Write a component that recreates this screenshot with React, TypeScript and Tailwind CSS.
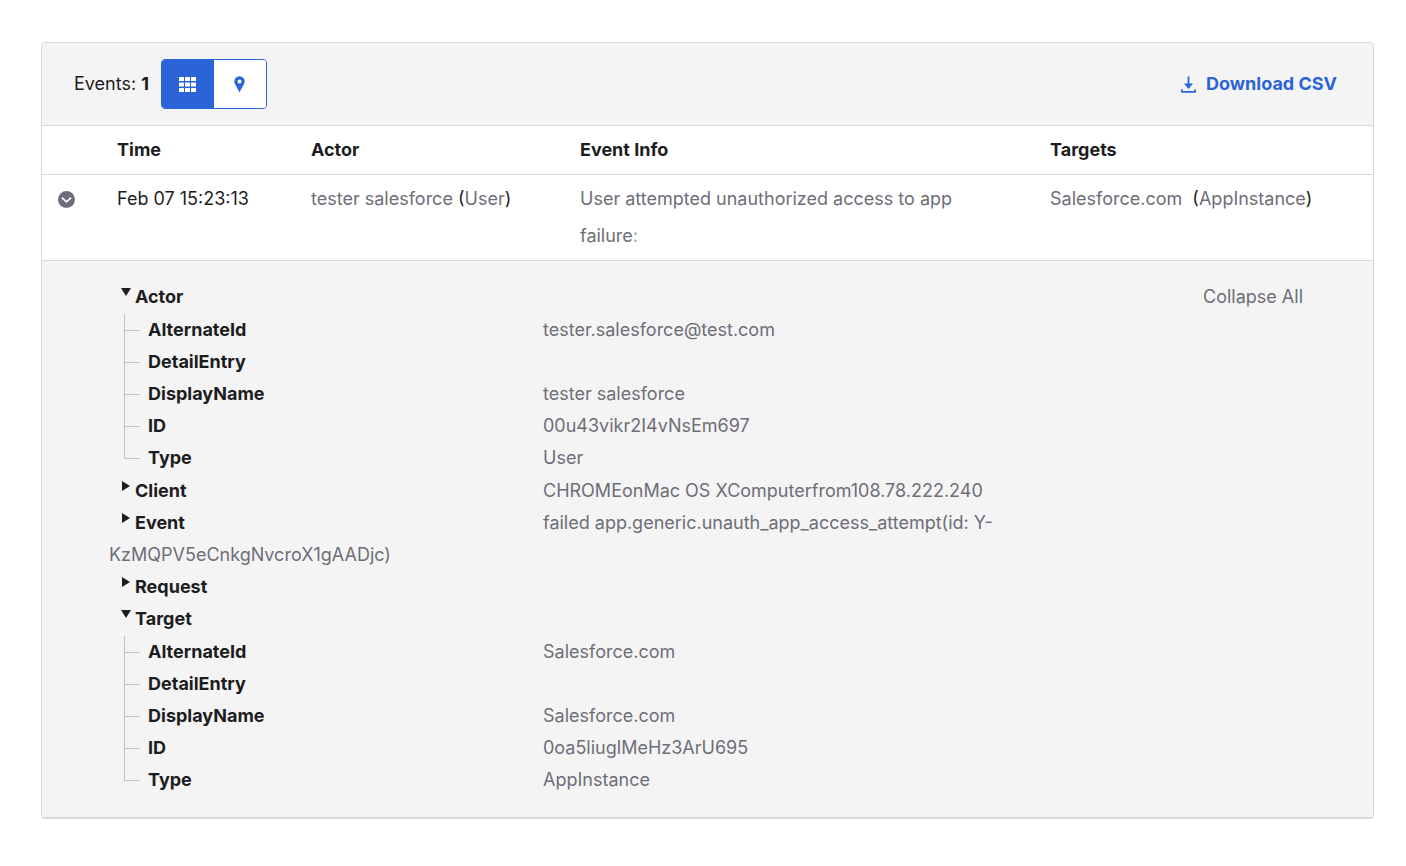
import { useState } from 'react'
import clsx from 'clsx'

type Field = { label: string; value?: string }
type Section = { label: string; value?: string; fields?: Field[] }

const SECTIONS: Section[] = [
  {
    label: 'Actor',
    fields: [
      { label: 'AlternateId', value: 'tester.salesforce@test.com' },
      { label: 'DetailEntry' },
      { label: 'DisplayName', value: 'tester salesforce' },
      { label: 'ID', value: '00u43vikr2I4vNsEm697' },
      { label: 'Type', value: 'User' },
    ],
  },
  { label: 'Client', value: 'CHROMEonMac OS XComputerfrom108.78.222.240' },
  { label: 'Event', value: 'failed app.generic.unauth_app_access_attempt(id: Y-KzMQPV5eCnkgNvcroX1gAADjc)' },
  { label: 'Request' },
  {
    label: 'Target',
    fields: [
      { label: 'AlternateId', value: 'Salesforce.com' },
      { label: 'DetailEntry' },
      { label: 'DisplayName', value: 'Salesforce.com' },
      { label: 'ID', value: '0oa5liuglMeHz3ArU695' },
      { label: 'Type', value: 'AppInstance' },
    ],
  },
]

function GridIcon() {
  return (
    <svg width="17" height="15" viewBox="0 0 17 15" fill="currentColor" aria-hidden="true">
      {[0, 6, 12].map((x) =>
        [0, 5.5, 11].map((y) => <rect key={`${x}-${y}`} x={x} y={y} width="5" height="4" rx="0.5" />),
      )}
    </svg>
  )
}

function PinIcon() {
  return (
    <svg width="11" height="17" viewBox="0 0 11 17" fill="currentColor" aria-hidden="true">
      <path
        fillRule="evenodd"
        d="M5.5 0.3A5.2 5.2 0 0 0 0.3 5.5C0.3 8.2 3.2 11.2 5.5 16.6C7.8 11.2 10.7 8.2 10.7 5.5A5.2 5.2 0 0 0 5.5 0.3ZM5.5 3.5A2 2 0 1 1 5.5 7.5A2 2 0 0 1 5.5 3.5Z"
      />
    </svg>
  )
}

function DownloadIcon() {
  return (
    <svg width="15" height="17" viewBox="0 0 15 17" aria-hidden="true">
      <path d="M6.6 0.5H8.4V7.5H12L7.5 13L3 7.5H6.6Z" fill="currentColor" />
      <path d="M0.9 13.2V15.9H14.1V13.2" fill="none" stroke="currentColor" strokeWidth="1.6" />
    </svg>
  )
}

function ExpandIcon({ open }: { open: boolean }) {
  return (
    <svg width="17" height="17" viewBox="0 0 16 16" aria-hidden="true" className={clsx(!open && '-rotate-90')}>
      <circle cx="8" cy="8" r="8" fill="#6e6e78" />
      <path d="M3.6 6.2L8 10.2L12.4 6.2" fill="none" stroke="#fff" strokeWidth="1.5" />
    </svg>
  )
}

function Caret({ open }: { open: boolean }) {
  return (
    <svg width="10" height="10" viewBox="0 0 10 10" fill="currentColor" aria-hidden="true">
      {open ? <path d="M0 1H10L5 9Z" /> : <path d="M1 0L9 5L1 10Z" />}
    </svg>
  )
}

function FieldRow({ field, last }: { field: Field; last: boolean }) {
  return (
    <li className="flex">
      <span className="w-4 shrink-0">
        <span className="block h-[17px] border-b border-l border-[#c1c1c8]" />
        {!last && <span className="block h-[15px] border-l border-[#c1c1c8]" />}
      </span>
      <span className="w-[403px] shrink-0 pl-2 font-bold text-[#1d1d21]">{field.label}</span>
      <span>{field.value}</span>
    </li>
  )
}

export default function App() {
  const [view, setView] = useState<'table' | 'map'>('table')
  const [rowOpen, setRowOpen] = useState(true)
  const [open, setOpen] = useState<string[]>(['Actor', 'Target'])

  const toggle = (label: string) =>
    setOpen((cur) => (cur.includes(label) ? cur.filter((l) => l !== label) : [...cur, label]))

  const viewCls = (active: boolean) =>
    clsx('flex w-[52px] items-center justify-center', active ? 'bg-[#2a64d6] text-white' : 'bg-white text-[#2a64d6]')

  return (
    <main className="min-h-screen bg-white pt-[42px] pr-8 pb-12 pl-[41px] font-['Inter','Liberation_Sans',sans-serif] text-lg text-[#1d1d21]">
      <section className="overflow-hidden rounded border border-b-2 border-[#d7d7dc] bg-white">
        {/* Toolbar */}
        <header className="flex items-center justify-between border-b border-[#d7d7dc] bg-[#f4f4f4] py-4 pr-9 pl-8">
          <div className="flex items-center gap-3">
            <p>
              Events: <span className="font-bold">1</span>
            </p>
            <div className="flex h-[50px] overflow-hidden rounded border border-[#2a64d6]">
              <button type="button" aria-label="Table view" onClick={() => setView('table')} className={viewCls(view === 'table')}>
                <GridIcon />
              </button>
              <button type="button" aria-label="Map view" onClick={() => setView('map')} className={viewCls(view === 'map')}>
                <PinIcon />
              </button>
            </div>
          </div>
          <a href="#download" className="flex items-center gap-2.5 font-bold text-[#2a64d6]">
            <DownloadIcon />
            Download CSV
          </a>
        </header>

        {/* Events */}
        <table className="w-full table-fixed border-collapse text-left">
          <colgroup>
            <col className="w-[58px]" />
            <col className="w-[194px]" />
            <col className="w-[269px]" />
            <col />
            <col className="w-[340px]" />
          </colgroup>
          <thead>
            <tr className="h-12 border-b border-[#d7d7dc]">
              <td />
              <th scope="col" className="pl-[17px] font-bold">Time</th>
              <th scope="col" className="pl-[17px] font-bold">Actor</th>
              <th scope="col" className="pl-[17px] font-bold">Event Info</th>
              <th scope="col" className="pl-[17px] font-bold">Targets</th>
            </tr>
          </thead>
          <tbody>
            <tr className="border-b border-[#d7d7dc] align-top leading-[37px] text-[#6e6e78]">
              <td className="pt-4 pl-4">
                <button type="button" aria-label="Toggle event details" onClick={() => setRowOpen(!rowOpen)} className="block">
                  <ExpandIcon open={rowOpen} />
                </button>
              </td>
              <td className="pt-[5px] pb-[6px] pl-[17px] text-[#1d1d21]">Feb 07 15:23:13</td>
              <td className="pt-[5px] pb-[6px] pl-[17px]">
                tester salesforce <span className="text-[#1d1d21]">(</span>User<span className="text-[#1d1d21]">)</span>
              </td>
              <td className="pt-[5px] pr-16 pb-[6px] pl-[17px]">
                User attempted unauthorized access to app failure<span className="text-[#a7a7af]">:</span>
              </td>
              <td className="pt-[5px] pb-[6px] pl-[17px]">
                Salesforce.com&nbsp; <span className="text-[#1d1d21]">(</span>AppInstance<span className="text-[#1d1d21]">)</span>
              </td>
            </tr>
            {rowOpen && (
              <tr className="bg-[#f4f4f4] align-top leading-8 text-[#6e6e78]">
                <td colSpan={5} className="py-5 pr-[70px] pl-[67px]">
                  <div className="flex items-start justify-between gap-8">
                    <ul className="min-w-0 flex-1">
                      {SECTIONS.map((s) => {
                        const isOpen = open.includes(s.label)
                        return (
                          <li key={s.label}>
                            <button
                              type="button"
                              aria-expanded={isOpen}
                              onClick={() => toggle(s.label)}
                              className="inline-flex w-[434px] items-start gap-1 pl-3 align-top font-bold text-[#1d1d21]"
                            >
                              <span className="pt-[6px]">
                                <Caret open={isOpen} />
                              </span>
                              {s.label}
                            </button>
                            {s.value}
                            {isOpen && s.fields && (
                              <ul className="py-px pl-[15px]">
                                {s.fields.map((f, i) => (
                                  <FieldRow key={f.label} field={f} last={i === s.fields!.length - 1} />
                                ))}
                              </ul>
                            )}
                          </li>
                        )
                      })}
                    </ul>
                    <button type="button" onClick={() => setOpen([])} className="shrink-0">
                      Collapse All
                    </button>
                  </div>
                </td>
              </tr>
            )}
          </tbody>
        </table>
      </section>
    </main>
  )
}
